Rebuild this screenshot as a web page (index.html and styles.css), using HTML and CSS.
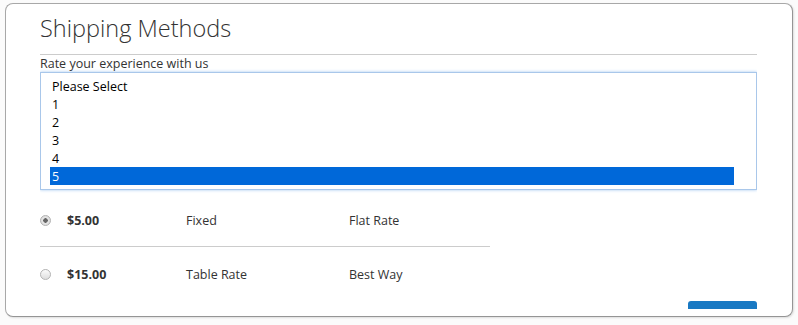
FILE: index.html
```html
<!DOCTYPE html>
<html>

    <head>
        <!-- Meta Data -->
        <meta charset="UTF-8">

        <!-- Title -->
        <title>Shipping Methods</title>

        <!-- Style -->
        <link rel="stylesheet" href="styles.css">
    </head>

    <body>
        <!-- Content -->
        <div class="panel">
            <div class="panel-body">
                <h1 class="step-title">Shipping Methods</h1>

                <div class="field">
                    <label class="field-label">Rate your experience with us</label>
                    <div class="listbox" role="listbox">
                        <div class="listbox-option">Please Select</div>
                        <div class="listbox-option">1</div>
                        <div class="listbox-option">2</div>
                        <div class="listbox-option">3</div>
                        <div class="listbox-option">4</div>
                        <div class="listbox-option selected">5</div>
                    </div>
                </div>

                <table class="methods">
                    <tr class="method-row">
                        <td class="col-radio"><span class="radio checked"></span></td>
                        <td class="col-price">$5.00</td>
                        <td class="col-method">Fixed</td>
                        <td class="col-carrier">Flat Rate</td>
                    </tr>
                    <tr class="method-row">
                        <td class="col-radio"><span class="radio"></span></td>
                        <td class="col-price">$15.00</td>
                        <td class="col-method">Table Rate</td>
                        <td class="col-carrier">Best Way</td>
                    </tr>
                </table>

                <!-- Next button sits below the fold of the panel -->
                <div class="actions">
                    <button class="button-primary" aria-label="Next"></button>
                </div>
            </div>
        </div>
    </body>

</html>
```

FILE: styles.css
```css
html {
    background-color: #fbfbfb;
}

body {
    margin: 0;
    padding: 3px 5px;
    font-family: "Open Sans", sans-serif;
    font-size: 12.5px;
    color: #333;
}

.panel {
    height: 314px;
    box-sizing: border-box;
    border: 1px solid #a8a8a8;
    border-right-color: #959595;
    border-bottom-color: #959595;
    border-radius: 8px;
    background: #fff;
    padding: 0 35px 8px 34px;
    box-shadow: 1px 1px 2px rgba(0, 0, 0, 0.12);
}

.panel-body {
    height: 305px;
    overflow: hidden;
}

.step-title {
    margin: 0;
    padding: 9px 0 10px;
    font-size: 23.5px;
    font-weight: 300;
    line-height: 31px;
    color: #333;
    border-bottom: 1px solid #ccc;
}

.field-label {
    display: block;
    font-size: 12.5px;
    line-height: 17px;
    color: #333;
}

.listbox {
    height: 118px;
    box-sizing: border-box;
    border: 1px solid #a9c7ea;
    box-shadow: 0 0 3px #a4c8f0;
    padding: 4px 22px 4px 9px;
    background: #fff;
}

.listbox-option {
    height: 17px;
    padding-top: 1px;
    line-height: 17px;
    padding-left: 2px;
    color: #000;
}

.listbox-option.selected {
    background: #0068d9;
    color: #fff;
}

.methods {
    border-collapse: collapse;
    width: 450px;
    margin-top: 3px;
}

.method-row td {
    height: 51px;
    padding: 2px 0 0;
    vertical-align: middle;
}

.method-row + .method-row td {
    border-top: 1px solid #ccc;
}

.col-radio {
    width: 27px;
}

.col-price {
    width: 119px;
    font-weight: 700;
}

.col-method {
    width: 163px;
}

.radio {
    display: block;
    width: 9px;
    height: 9px;
    border: 1px solid #b4b4b4;
    border-radius: 50%;
    background: linear-gradient(#fbfbfb, #dedede);
}

.radio.checked {
    background: radial-gradient(circle, #666 0, #666 2px, #e6e6e6 2.5px, #d6d6d6);
}

.actions {
    display: flex;
    justify-content: flex-end;
    margin-top: 1px;
}

.button-primary {
    width: 69px;
    height: 34px;
    border: 0;
    border-radius: 3px;
    background: #1979c3;
}
```
